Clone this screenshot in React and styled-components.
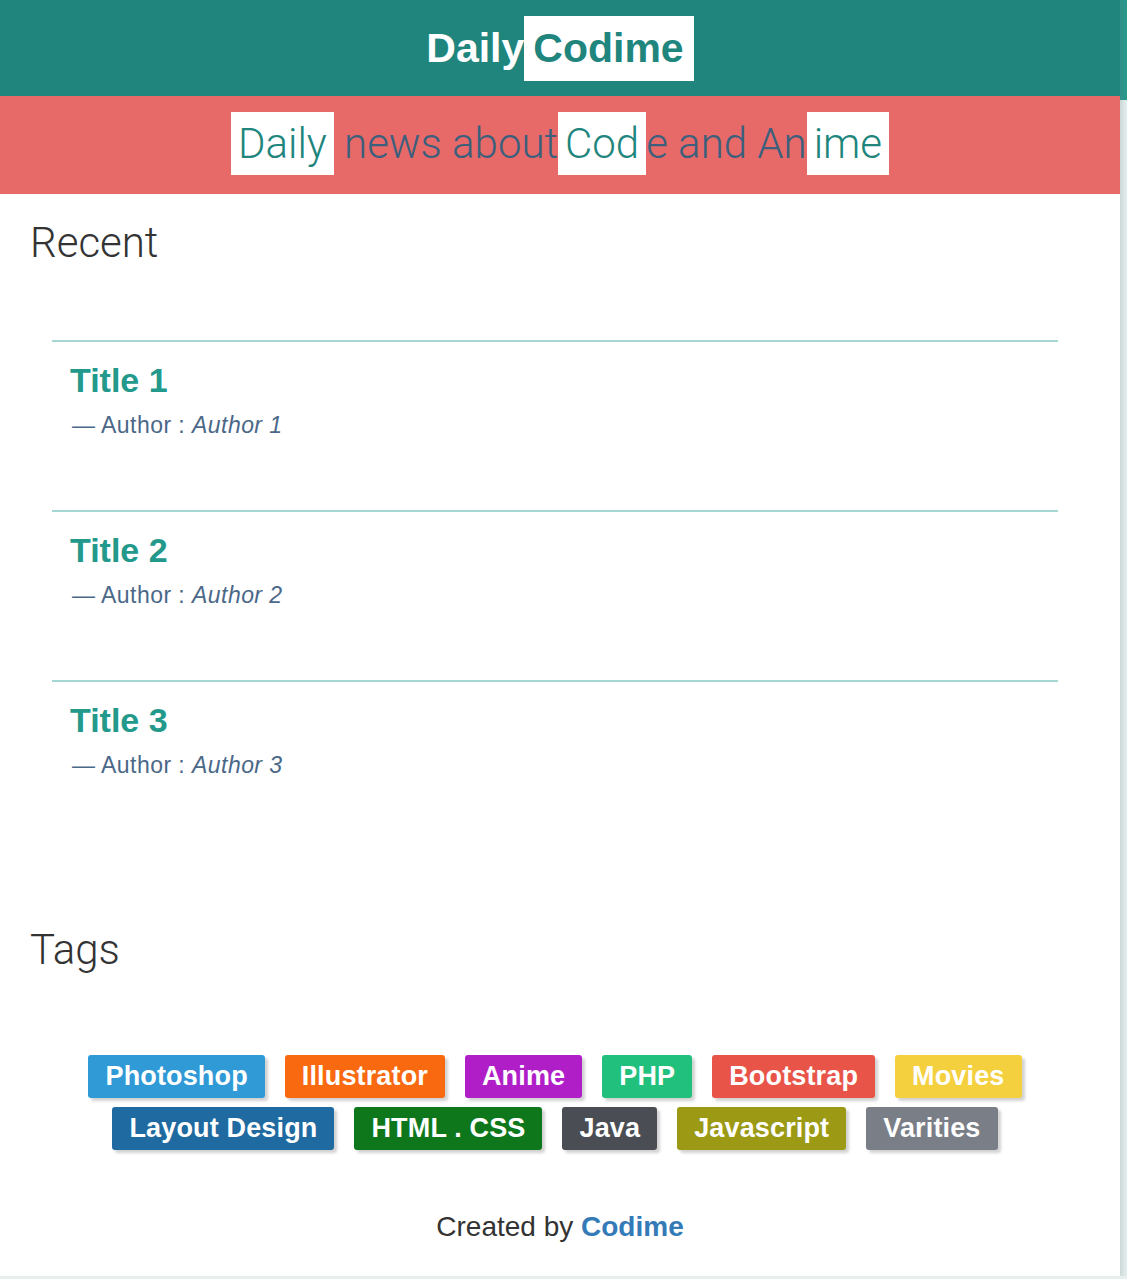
import React from 'react';
import styled, { createGlobalStyle } from 'styled-components';

const GlobalStyle = createGlobalStyle`
  html {
    background: #e6eeee linear-gradient(#2a988c, #2a988c) no-repeat;
    background-size: 100% 100px;
  }
  body {
    margin: 0;
    font-family: "Liberation Sans", Arial, sans-serif;
  }
`;

const Page = styled.div`
  width: 1120px;
  background: #fff;
  box-shadow: 2px 2px 6px rgba(80, 110, 110, 0.25);
  padding-bottom: 33px;
`;

const Header = styled.header`
  height: 96px;
  background: #20857d;
  display: flex;
  align-items: center;
  justify-content: center;
  font-size: 41px;
  font-weight: 700;
  color: #fff;
`;

const Brand = styled.span`
  background: #fff;
  color: #20857d;
  padding: 9px 10px 10px 9px;
  line-height: 46px;
`;

const Tagline = styled.div`
  height: 98px;
  background: #e76a69;
  display: flex;
  align-items: center;
  justify-content: center;
  padding-bottom: 4px;
  box-sizing: border-box;
  font-family: Roboto, "Liberation Sans", sans-serif;
  font-weight: 300;
  font-size: 42px;
  color: #3b5f7c;
  white-space: pre;
`;

const Mark = styled.span`
  background: #fff;
  color: #20857d;
  padding: 8px 7px;
  line-height: 47px;
`;

const Section = styled.section`
  padding: 0 30px;
`;

const Heading = styled.h2`
  margin: ${p => p.$top}px 0 0;
  font-family: Roboto, "Liberation Sans", sans-serif;
  font-weight: 300;
  font-size: 42px;
  line-height: 48px;
  color: #333;
`;

const PostList = styled.ul`
  list-style: none;
  margin: 73px 32px 0 22px;
  padding: 0;
`;

const Post = styled.li`
  box-sizing: border-box;
  border-top: 2px solid #a6d8d3;
  height: 170px;
  padding: 18px 18px 0;
`;

const PostTitle = styled.h3`
  margin: 0;
  font-size: 34px;
  line-height: 40px;
  font-weight: 700;
  color: #23998c;
`;

const Byline = styled.p`
  margin: 12px 0 0 2px;
  font-size: 23px;
  line-height: 26px;
  letter-spacing: 0.45px;
  color: #4b6888;

  em {
    font-style: italic;
  }
`;

const Tags = styled.div`
  display: flex;
  flex-wrap: wrap;
  justify-content: center;
  gap: 9px 20px;
  margin: 81px 10px 0 0;
`;

const Tag = styled.a`
  display: inline-block;
  background: ${p => p.$bg};
  color: #fff;
  font-weight: 700;
  font-size: 27px;
  line-height: 43px;
  padding: 0 17px;
  letter-spacing: 0.15px;
  border-radius: 3px;
  box-shadow: 3px 3px 3px rgba(0, 0, 0, 0.18);
  text-decoration: none;
`;

const Footer = styled.footer`
  margin-top: 61px;
  text-align: center;
  font-size: 28px;
  line-height: 32px;
  color: #333;

  strong {
    color: #337ab7;
  }
`;

const posts = [1, 2, 3];

const tags = [
  ['Photoshop', '#2f9ad6'],
  ['Illustrator', '#f96a10'],
  ['Anime', '#b01ec8'],
  ['PHP', '#21c07c'],
  ['Bootstrap', '#e85447'],
  ['Movies', '#f4d03f'],
  ['Layout Design', '#1f6aa0'],
  ['HTML . CSS', '#0e771c'],
  ['Java', '#4a4e54'],
  ['Javascript', '#9c9a14'],
  ['Varities', '#7a7e86'],
];

export default function App() {
  return (
    <>
      <GlobalStyle />
      <Page>
        <Header>
          Daily<Brand>Codime</Brand>
        </Header>
        <Tagline>
          <Mark>Daily</Mark> news about<Mark>Cod</Mark>e and An<Mark>ime</Mark>
        </Tagline>
        <Section>
          <Heading $top={25}>Recent</Heading>
          <PostList>
            {posts.map(n => (
              <Post key={n}>
                <PostTitle>Title {n}</PostTitle>
                <Byline>— Author : <em>Author {n}</em></Byline>
              </Post>
            ))}
          </PostList>
          <Heading $top={76}>Tags</Heading>
          <Tags>
            {tags.map(([name, bg]) => (
              <Tag key={name} $bg={bg}>{name}</Tag>
            ))}
          </Tags>
          <Footer>
            Created by <strong>Codime</strong>
          </Footer>
        </Section>
      </Page>
    </>
  );
}
